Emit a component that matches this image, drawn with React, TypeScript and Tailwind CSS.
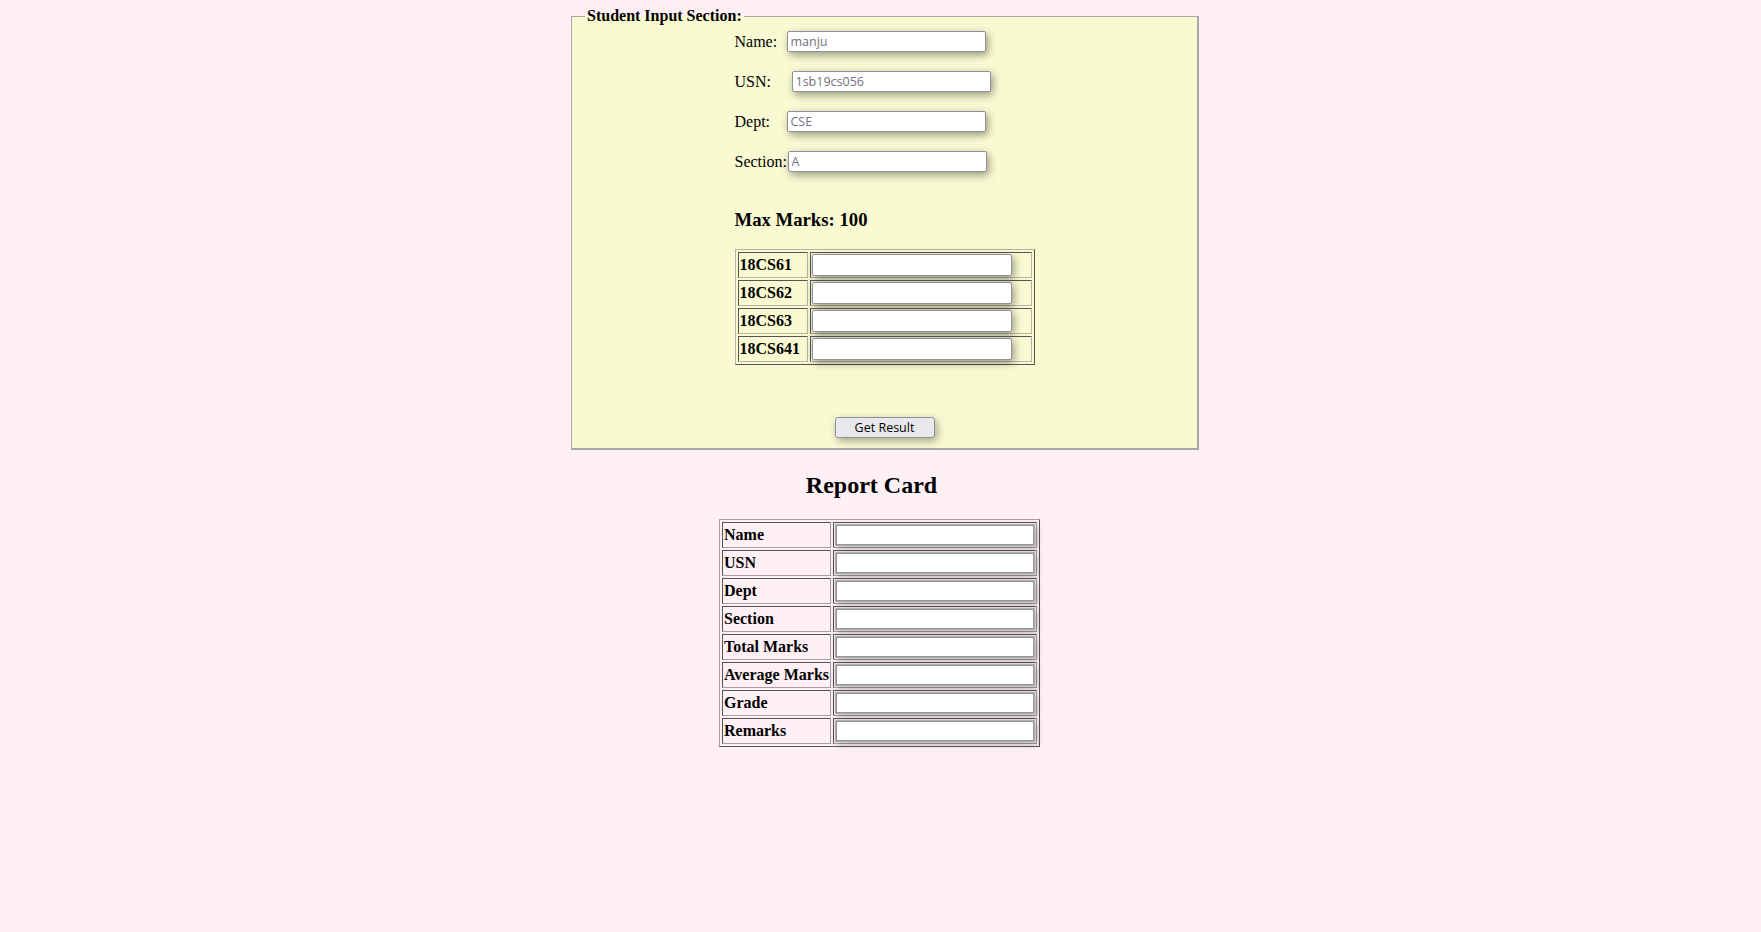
const serif = "font-['Liberation_Serif','Times_New_Roman',serif]";
const sans = "font-['Open_Sans','Noto_Sans',sans-serif]";

const fieldInput =
  "h-[21px] w-[199px] rounded-[2px] border border-[#8f8f9d] bg-white px-[3px] text-[12.5px] text-black placeholder:text-[#75707f] shadow-[2px_3px_9px_rgba(0,0,0,0.4)] outline-none font-['Open_Sans','Noto_Sans',sans-serif]";

const markInput =
  "h-[22px] w-[200px] rounded-[2px] border border-[#8f8f9d] bg-white shadow-[2px_3px_9px_rgba(0,0,0,0.4)] outline-none";

const reportInput =
  "h-[22px] w-[200px] border border-[#b0b0b0] bg-white shadow-[inset_0_0_0_1px_#94949c,2px_2px_7px_rgba(0,0,0,0.3)] outline-none";

const insetCell =
  "flex items-center border border-t-[#555555] border-l-[#555555] border-r-[#b5b5a5] border-b-[#b5b5a5] p-[1px] h-[26px]";

const insetCellPink =
  "flex items-center border border-t-[#555555] border-l-[#555555] border-r-[#a8a0a4] border-b-[#a8a0a4] p-[1px] h-[26px]";

function Row({ label, lw, ph }: { label: string; lw: string; ph: string }) {
  return (
    <div className="flex h-[21px] items-center">
      <span className={lw + " shrink-0 whitespace-nowrap text-[16px] leading-[18px] text-black"}>{label}</span>
      <input className={fieldInput} placeholder={ph} />
    </div>
  );
}

export default function App() {
  const subjects = ["18CS61", "18CS62", "18CS63", "18CS641"];
  const report = ["Name", "USN", "Dept", "Section", "Total Marks", "Average Marks", "Grade", "Remarks"];
  return (
    <div className={"min-h-[932px] w-full bg-[#fff0f5] pt-[7px] " + serif}>
      <fieldset className="ml-[571px] w-[628px] border-t border-l border-r-2 border-b-2 border-[#a8a8a8] bg-[#fafad2] px-[12px] pb-[10px]">
        <legend className="ml-[1px] px-[2px] text-[16px] font-bold leading-[18px] text-black">Student Input Section:</legend>
        <div className="mx-auto mt-[6px] flex w-[300px] flex-col">
          <div className="flex flex-col gap-[19px]">
            <Row label="Name:" lw="w-[52px]" ph="manju" />
            <Row label="USN:" lw="w-[57px]" ph="1sb19cs056" />
            <Row label="Dept:" lw="w-[52px]" ph="CSE" />
            <Row label="Section:" lw="w-[53px]" ph="A" />
          </div>
          <h3 className="mt-[37px] text-[18.72px] font-bold leading-[22px] text-black">Max Marks: 100</h3>
          <div className="mt-[18px] w-[300px] border border-t-[#b5b5a5] border-l-[#b5b5a5] border-r-[#555555] border-b-[#555555]">
            <div className="grid grid-cols-[70px_222px] gap-[2px] p-[2px]">
              {subjects.map((s) => (
                <>
                  <div key={s + "a"} className={insetCell}>
                    <span className="text-[16px] font-bold leading-[18px] text-black">{s}</span>
                  </div>
                  <div key={s + "b"} className={insetCell}>
                    <input className={markInput} />
                  </div>
                </>
              ))}
            </div>
          </div>
          <div className="mt-[52px] flex justify-center">
            <button
              className={
                "h-[21px] w-[100px] rounded-[3px] border border-[#8f8f9d] bg-[#e9e9ed] text-[12.5px] leading-[19px] text-black shadow-[2px_3px_9px_rgba(0,0,0,0.35)] " +
                sans
              }
            >
              Get Result
            </button>
          </div>
        </div>
      </fieldset>

      <h2 className="mt-[21px] pr-[18px] text-center text-[24px] font-bold leading-[28px] text-black">Report Card</h2>

      <div className="mx-auto mt-[20px] w-[321px] -translate-x-px border border-t-[#a8a0a4] border-l-[#a8a0a4] border-r-[#555555] border-b-[#555555]">
        <div className="grid grid-cols-[109px_204px] gap-[2px] p-[2px]">
          {report.map((r) => (
            <>
              <div key={r + "a"} className={insetCellPink}>
                <span className="whitespace-nowrap text-[16px] font-bold leading-[18px] text-black">{r}</span>
              </div>
              <div key={r + "b"} className={insetCellPink}>
                <input className={reportInput} />
              </div>
            </>
          ))}
        </div>
      </div>
    </div>
  );
}
